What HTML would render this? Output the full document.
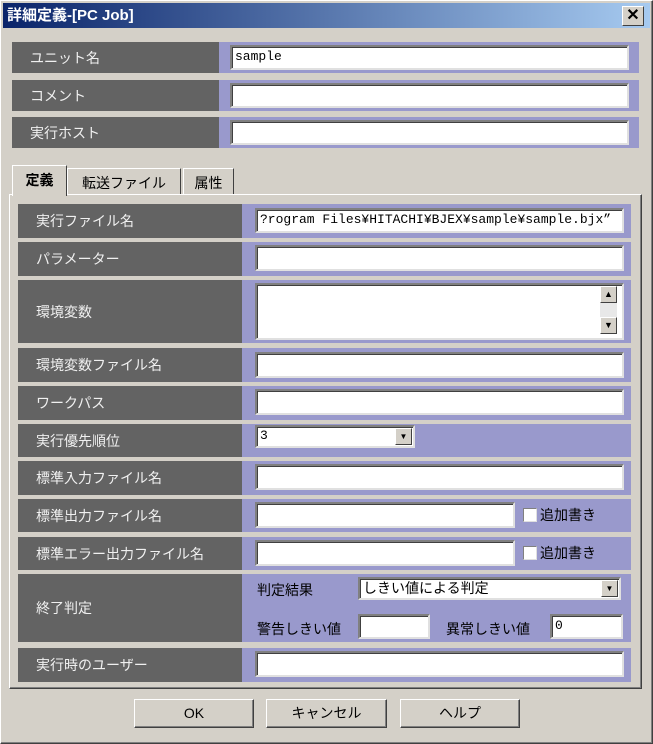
<!DOCTYPE html>
<html><head><meta charset="utf-8"><style>
*{box-sizing:border-box;margin:0;padding:0}
body{width:653px;height:744px;background:#d4d0c8;font-family:"Liberation Sans","Noto Sans CJK JP",sans-serif;font-size:14px;position:relative;overflow:hidden}
.a{position:absolute}
.win{left:0;top:0;width:653px;height:744px;border:1px solid #fff;border-right-color:#404040;border-bottom-color:#404040;box-shadow:inset -1px -1px #808080}
.title{left:3px;top:3px;width:647px;height:25px;background:linear-gradient(90deg,#0a246a,#a6caf0);color:#fff;font-weight:bold;font-size:15px;line-height:25px;padding-left:4px}
.close{left:622px;top:6px;width:22px;height:20px;background:#d4d0c8;border:1px solid #fff;border-right-color:#404040;border-bottom-color:#404040;font-size:16px;font-weight:bold;text-align:center;line-height:17px;color:#000}
.lab{background:#636363;color:#f0f0f0;padding-left:18px;display:flex;align-items:center;font-size:14px}
.blu{background:#9999cc}
.inp{background:#fff;border:2px solid #808080;border-right-color:#e0e0e0;border-bottom-color:#e0e0e0;box-shadow:inset 1px 1px #404040;font-family:"Liberation Mono","Noto Sans CJK JP",monospace;font-size:13px;padding-left:3px;line-height:20px;white-space:nowrap;overflow:hidden}
.btn{background:#d4d0c8;border:1px solid #fff;border-right-color:#404040;border-bottom-color:#404040;box-shadow:inset -1px -1px #808080;text-align:center;font-size:14px;line-height:26px}
.dd{width:17px;height:17px;background:#d4d0c8;border:1px solid #fff;border-right-color:#404040;border-bottom-color:#404040;font-size:8px;text-align:center;line-height:15px}
.tab{background:#d4d0c8;border:1px solid #fff;border-right-color:#404040;border-bottom:none;text-align:center;line-height:28px;font-size:14px}
.cb{width:14px;height:14px;background:#fff;border:1px solid #808080;border-right-color:#e0e0e0;border-bottom-color:#e0e0e0}
</style></head><body>
<div class="a win"></div>
<div class="a title">詳細定義-[PC Job]</div>
<div class="a close">✕</div>

<div class="a lab" style="left:12px;top:42px;width:207px;height:31px">ユニット名</div>
<div class="a blu" style="left:219px;top:42px;width:420px;height:31px"></div>
<div class="a inp" style="left:230px;top:45px;width:399px;height:25px">sample</div>
<div class="a lab" style="left:12px;top:80px;width:207px;height:31px">コメント</div>
<div class="a blu" style="left:219px;top:80px;width:420px;height:31px"></div>
<div class="a inp" style="left:230px;top:83px;width:399px;height:25px"></div>
<div class="a lab" style="left:12px;top:117px;width:207px;height:31px">実行ホスト</div>
<div class="a blu" style="left:219px;top:117px;width:420px;height:31px"></div>
<div class="a inp" style="left:230px;top:120px;width:399px;height:25px"></div>

<div class="a" style="left:9px;top:194px;width:633px;height:495px;border:1px solid #fff;border-right-color:#404040;border-bottom-color:#404040;box-shadow:inset -1px -1px #808080"></div>
<div class="a tab" style="left:12px;top:165px;width:55px;height:31px;font-weight:bold;z-index:2">定義</div>
<div class="a tab" style="left:67px;top:168px;width:114px;height:26px">転送ファイル</div>
<div class="a tab" style="left:183px;top:168px;width:51px;height:26px">属性</div>

<div class="a lab" style="left:18px;top:204px;width:224px;height:34px">実行ファイル名</div>
<div class="a blu" style="left:242px;top:204px;width:389px;height:34px"></div>
<div class="a inp" style="left:255px;top:208px;width:369px;height:25px">?rogram Files¥HITACHI¥BJEX¥sample¥sample.bjx”</div>

<div class="a lab" style="left:18px;top:242px;width:224px;height:34px">パラメーター</div>
<div class="a blu" style="left:242px;top:242px;width:389px;height:34px"></div>
<div class="a inp" style="left:255px;top:245px;width:369px;height:26px"></div>

<div class="a lab" style="left:18px;top:280px;width:224px;height:63px">環境変数</div>
<div class="a blu" style="left:242px;top:280px;width:389px;height:63px"></div>
<div class="a inp" style="left:255px;top:283px;width:369px;height:57px"></div>
<div class="a dd" style="left:600px;top:286px;font-size:9px">▲</div>
<div class="a" style="left:600px;top:303px;width:17px;height:14px;background:#e8e8e8"></div>
<div class="a dd" style="left:600px;top:317px;font-size:9px">▼</div>

<div class="a lab" style="left:18px;top:348px;width:224px;height:34px">環境変数ファイル名</div>
<div class="a blu" style="left:242px;top:348px;width:389px;height:34px"></div>
<div class="a inp" style="left:255px;top:352px;width:369px;height:26px"></div>

<div class="a lab" style="left:18px;top:386px;width:224px;height:34px">ワークパス</div>
<div class="a blu" style="left:242px;top:386px;width:389px;height:34px"></div>
<div class="a inp" style="left:255px;top:389px;width:369px;height:26px"></div>

<div class="a lab" style="left:18px;top:424px;width:224px;height:33px">実行優先順位</div>
<div class="a blu" style="left:242px;top:424px;width:389px;height:33px"></div>
<div class="a inp" style="left:255px;top:425px;width:160px;height:23px;line-height:18px">3</div>
<div class="a dd" style="left:395px;top:428px">▼</div>

<div class="a lab" style="left:18px;top:461px;width:224px;height:34px">標準入力ファイル名</div>
<div class="a blu" style="left:242px;top:461px;width:389px;height:34px"></div>
<div class="a inp" style="left:255px;top:464px;width:369px;height:26px"></div>

<div class="a lab" style="left:18px;top:499px;width:224px;height:33px">標準出力ファイル名</div>
<div class="a blu" style="left:242px;top:499px;width:389px;height:33px"></div>
<div class="a inp" style="left:255px;top:502px;width:260px;height:26px"></div>
<div class="a cb" style="left:523px;top:508px"></div>
<div class="a" style="left:540px;top:505px;font-size:14px">追加書き</div>

<div class="a lab" style="left:18px;top:537px;width:224px;height:33px">標準エラー出力ファイル名</div>
<div class="a blu" style="left:242px;top:537px;width:389px;height:33px"></div>
<div class="a inp" style="left:255px;top:540px;width:260px;height:26px"></div>
<div class="a cb" style="left:523px;top:546px"></div>
<div class="a" style="left:540px;top:543px;font-size:14px">追加書き</div>

<div class="a lab" style="left:18px;top:574px;width:224px;height:68px">終了判定</div>
<div class="a blu" style="left:242px;top:574px;width:389px;height:68px"></div>
<div class="a" style="left:257px;top:580px">判定結果</div>
<div class="a inp" style="left:358px;top:577px;width:263px;height:23px;line-height:18px;font-family:'Liberation Sans','Noto Sans CJK JP',sans-serif;font-size:14px">しきい値による判定</div>
<div class="a dd" style="left:601px;top:580px">▼</div>
<div class="a" style="left:257px;top:619px">警告しきい値</div>
<div class="a inp" style="left:358px;top:614px;width:72px;height:25px"></div>
<div class="a" style="left:446px;top:619px">異常しきい値</div>
<div class="a inp" style="left:550px;top:614px;width:73px;height:25px">0</div>

<div class="a lab" style="left:18px;top:648px;width:224px;height:34px">実行時のユーザー</div>
<div class="a blu" style="left:242px;top:648px;width:389px;height:34px"></div>
<div class="a inp" style="left:255px;top:651px;width:369px;height:26px"></div>

<div class="a btn" style="left:134px;top:699px;width:120px;height:29px">OK</div>
<div class="a btn" style="left:266px;top:699px;width:121px;height:29px">キャンセル</div>
<div class="a btn" style="left:400px;top:699px;width:120px;height:29px">ヘルプ</div>
</body></html>
